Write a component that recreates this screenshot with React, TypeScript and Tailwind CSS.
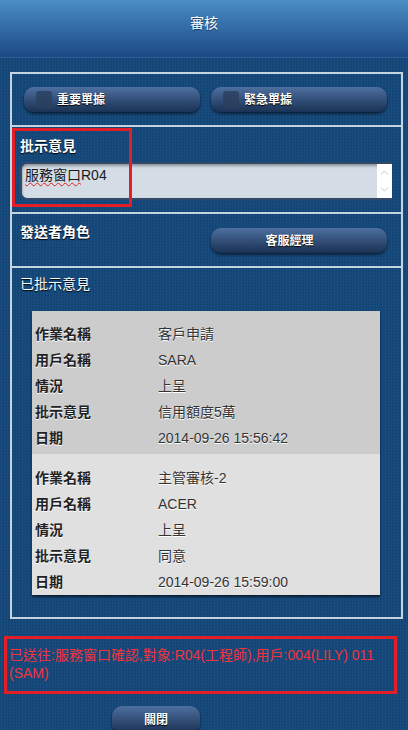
import { ChevronDown, ChevronUp } from 'lucide-react';

const records = [
  {
    bg: 'bg-[#cccccc]',
    pad: 'pt-[10px] pb-[3px]',
    rows: [
      ['作業名稱', '客戶申請'],
      ['用戶名稱', 'SARA'],
      ['情況', '上呈'],
      ['批示意見', '信用額度5萬'],
      ['日期', '2014-09-26 15:56:42'],
    ],
  },
  {
    bg: 'bg-[#e0e0e0]',
    pad: 'pt-[11px] pb-0',
    rows: [
      ['作業名稱', '主管審核-2'],
      ['用戶名稱', 'ACER'],
      ['情況', '上呈'],
      ['批示意見', '同意'],
      ['日期', '2014-09-26 15:59:00'],
    ],
  },
];

function DarkButton({ label, check, className = '' }: { label: string; check?: boolean; className?: string }) {
  return (
    <div
      className={`relative flex h-[25px] items-center rounded-[10px] bg-linear-to-b from-[#4e70a0] to-[#1a3254] text-[12px] font-bold text-white shadow-[0_2px_3px_rgba(0,0,0,0.55)] [text-shadow:0_1px_1px_#000] ${className}`}
    >
      {check && <span className="ml-[12px] h-[18px] w-[16px] rounded-[3px] bg-[#2a3f5e] opacity-80" />}
      <span className={check ? 'ml-[5px]' : 'flex-1 text-center'}>{label}</span>
    </div>
  );
}

export default function App() {
  return (
    <div className="min-h-[730px] w-[408px] overflow-hidden bg-[#164979] bg-[image:repeating-conic-gradient(#194d7f_0%_25%,#134373_0%_50%)] bg-[length:3px_3px] font-['Liberation_Sans','Noto_Sans_CJK_TC',sans-serif]">
      {/* header */}
      <div className="flex h-[58px] items-center justify-center border-b border-[#2e5f92] bg-linear-to-b from-[#4b8dc5] to-[#1b4a86] pb-[10px] text-[14px] text-white [text-shadow:0_1px_1px_rgba(0,0,0,0.5)]">
        審核
      </div>

      <div className="ml-[10px] mr-[5px] mt-[14px] border-2 border-[#c6d4df]">
        {/* 單據 buttons */}
        <div className="grid grid-cols-2 gap-[11px] py-[13px] pl-[12px] pr-[14px]">
          <DarkButton label="重要單據" check />
          <DarkButton label="緊急單據" check />
        </div>

        {/* 批示意見 */}
        <div className="relative border-t-2 border-[#c6d4df] pb-[12px] pl-[8px] pr-[9px] pt-[10px]">
          <div className="text-[14px] font-bold leading-[18px] text-white [text-shadow:0_1px_1px_#000]">批示意見</div>
          <div className="mt-[7px] flex h-[38px] overflow-hidden rounded-l-[7px] border-2 border-r-0 border-[#33496a] bg-[#d4dde6] shadow-[inset_0_2px_3px_rgba(0,0,0,0.35)]">
            <div className="flex-1 pl-[3px] pt-[2px] text-[14px] leading-[18px] text-[#1a1a1a]">
              <span className="underline decoration-[#e02020] decoration-wavy decoration-1 underline-offset-2">服務窗口</span>R04
            </div>
            <div className="flex w-[15px] flex-col items-center justify-between bg-white py-[2px] text-[#b8b8b8]">
              <ChevronUp size={13} strokeWidth={1.5} />
              <ChevronDown size={13} strokeWidth={1.5} />
            </div>
          </div>
          <div className="absolute left-0 top-[1px] h-[79px] w-[120px] border-[3px] border-[#e21e26]" />
        </div>

        {/* 發送者角色 */}
        <div className="grid grid-cols-2 gap-[11px] border-t-2 border-[#c6d4df] pb-[13px] pl-[12px] pr-[14px] pt-[14px]">
          <div className="-ml-[4px] -mt-[5px] text-[14px] font-bold leading-[18px] text-white [text-shadow:0_1px_1px_#000]">發送者角色</div>
          <DarkButton label="客服經理" className="pr-[19px]" />
        </div>

        {/* 已批示意見 */}
        <div className="border-t-2 border-[#c6d4df] pb-[22px] pt-[7px]">
          <div className="pl-[8px] text-[14px] leading-[18px] text-white [text-shadow:0_1px_1px_#000]">已批示意見</div>
          <div className="ml-[20px] mr-[21px] mt-[18px] shadow-[0_2px_2px_rgba(0,0,0,0.6)]">
            {records.map((r, i) => (
              <div key={i} className={`${r.bg} ${r.pad}`}>
                {r.rows.map(([k, v]) => (
                  <div key={k} className="flex h-[26px] items-center text-[14px] [text-shadow:0_1px_0_#fff]">
                    <span className="w-[126px] pl-[3px] font-bold text-[#222]">{k}</span>
                    <span className="text-[#333]">{v}</span>
                  </div>
                ))}
              </div>
            ))}
          </div>
        </div>
      </div>

      {/* sent message */}
      <div className="ml-[4px] mt-[17px] w-[393px] border-[3px] border-[#e21e26] pb-[9px] pl-[2px] pt-[7px] text-[14px] leading-[18px] text-[#f0343c]">
        已送往:服務窗口確認,對象:R04(工程師),用戶:004(LILY) 011 (SAM)
      </div>

      <div className="ml-[112px] mt-[12px] w-[88px]">
        <DarkButton label="關閉" className="h-[27px]" />
      </div>
    </div>
  );
}
